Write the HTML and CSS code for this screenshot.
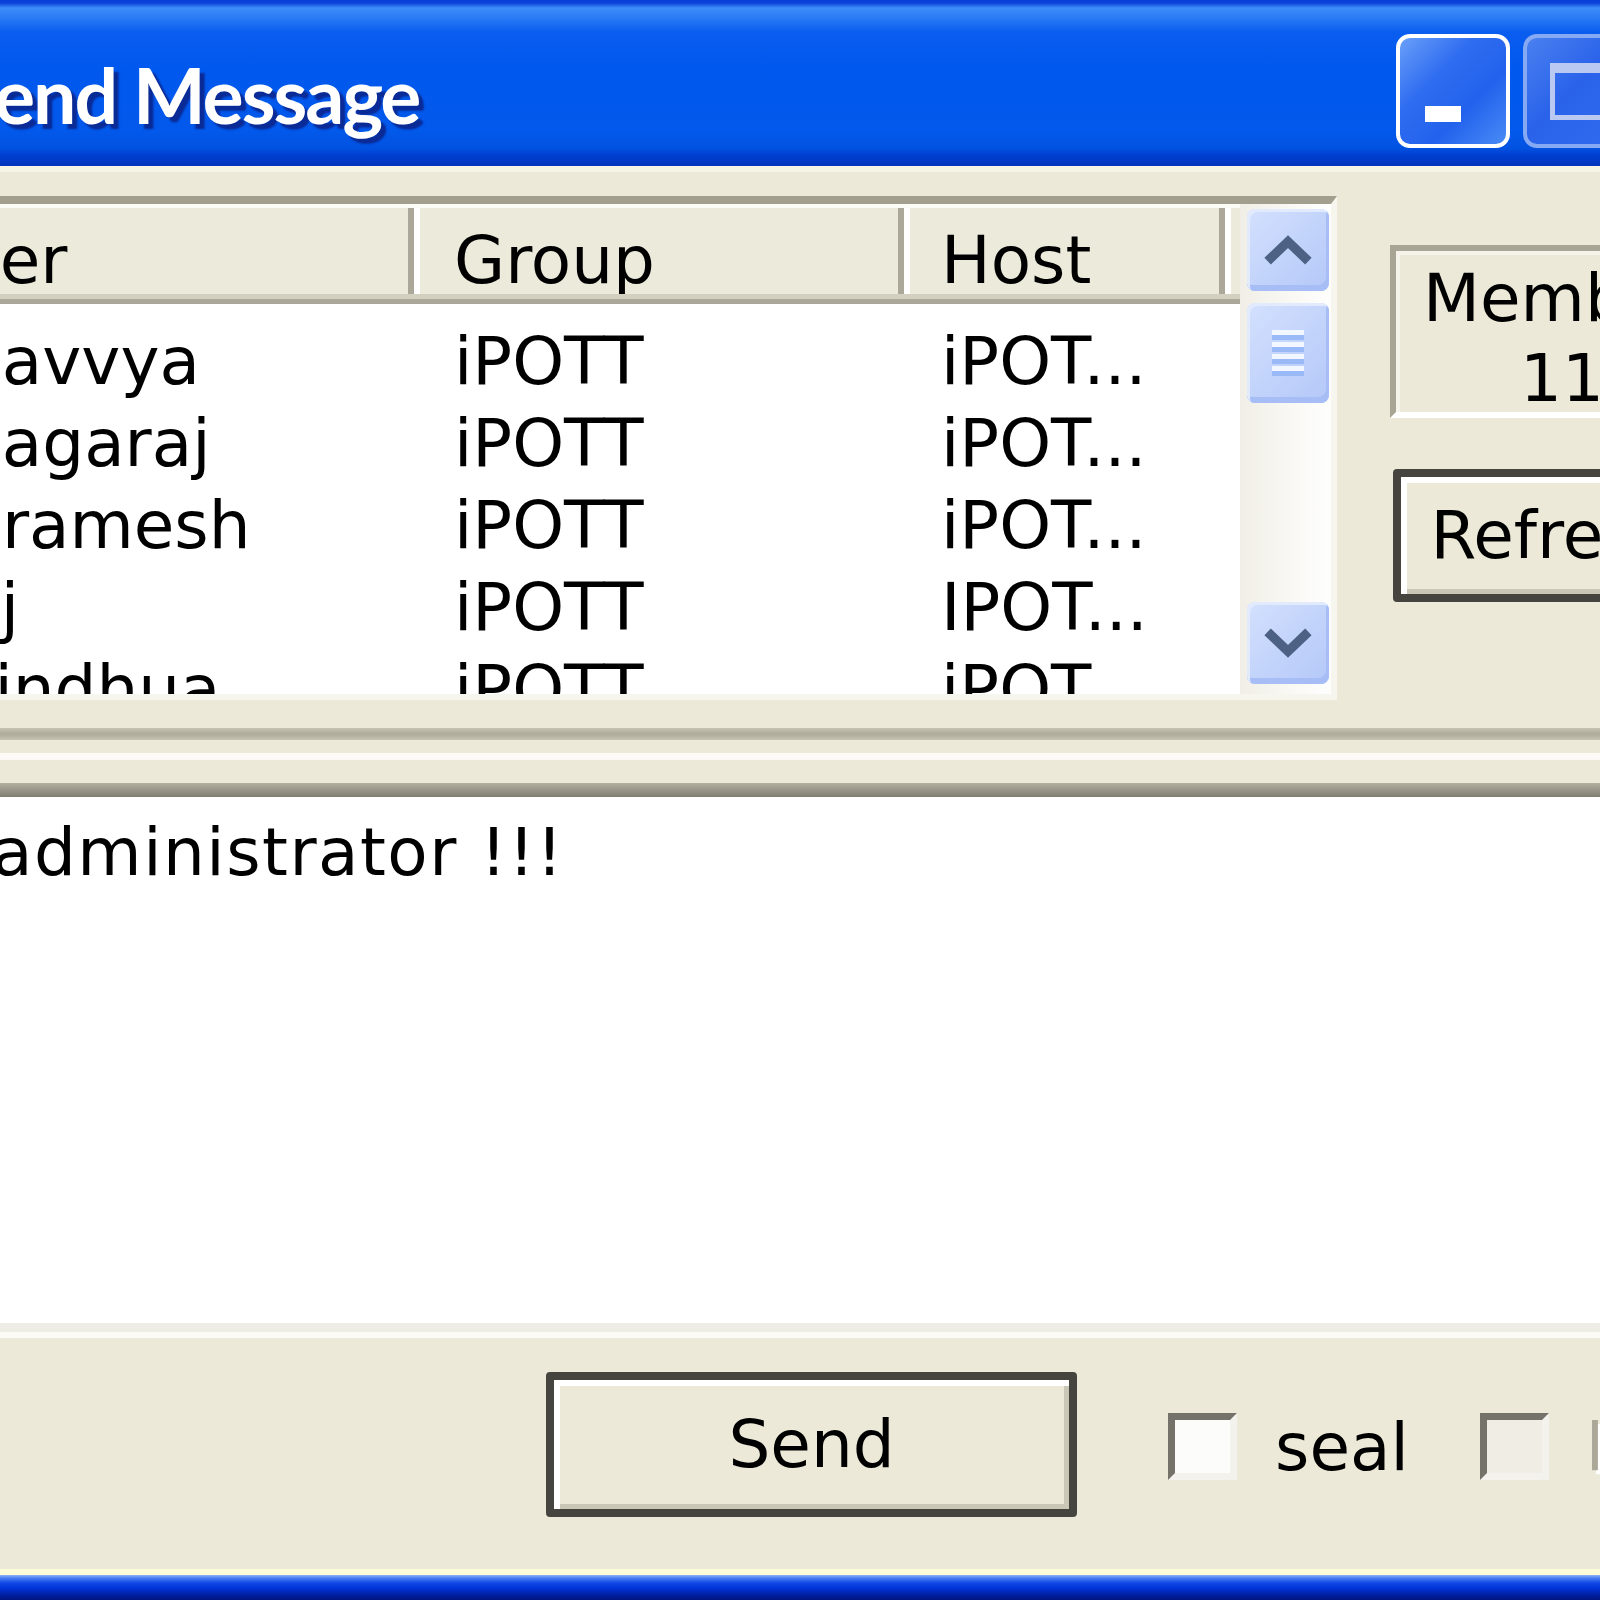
FILE: index.html
```html
<!DOCTYPE html>
<html lang="en">
<head>
    <meta charset="UTF-8">
    <meta name="viewport" content="width=device-width, initial-scale=1.0">
    <title>Send Message</title>
    <link rel="stylesheet" href="styles.css">
</head>
<body>

    <div class="window">
        <div class="titlebar">
            <div class="title">end Message</div>
            <div class="caption-buttons">
                <div class="cap-btn min"><span class="min-glyph"></span></div>
                <div class="cap-btn max"><span class="max-glyph"></span></div>
            </div>
        </div>

        <div class="client">
            <div class="top-row">
                <div class="listview">
                    <div class="lv-main">
                        <div class="lv-header">
                            <div class="hd c1"><span class="hd-user">User</span></div>
                            <div class="hd c2">Group</div>
                            <div class="hd c3">Host</div>
                            <div class="hd c4"></div>
                        </div>
                        <div class="lv-body">
                            <div class="lv-row"><span class="name">havvya</span><span>iPOTT</span><span>iPOT...</span></div>
                            <div class="lv-row"><span class="name">nagaraj</span><span>iPOTT</span><span>iPOT...</span></div>
                            <div class="lv-row"><span class="name">pramesh</span><span>iPOTT</span><span>iPOT...</span></div>
                            <div class="lv-row"><span class="name long">Raj</span><span>iPOTT</span><span>IPOT...</span></div>
                            <div class="lv-row"><span class="name">sindhua</span><span>iPOTT</span><span>iPOT...</span></div>
                        </div>
                    </div>
                    <div class="vscroll">
                        <div class="sb-btn">
                            <svg viewBox="0 0 82 82" width="76" height="76"><path d="M19 53 L41 32 L63 53" fill="none" stroke="#4d6185" stroke-width="10"/></svg>
                        </div>
                        <div class="sb-thumb"><span class="grip"></span></div>
                        <div class="sb-btn down">
                            <svg viewBox="0 0 82 82" width="76" height="76"><path d="M19 29 L41 50 L63 29" fill="none" stroke="#4d6185" stroke-width="10"/></svg>
                        </div>
                    </div>
                </div>

                <div class="side">
                    <div class="members">
                        <div>Members</div>
                        <div class="count">11</div>
                    </div>
                    <div class="btn refresh">Refresh</div>
                </div>
            </div>

            <div class="splitter"></div>

            <div class="edit"><span class="msg">administrator !!!</span></div>

            <div class="bottom-row">
                <div class="btn send">Send</div>
                <span class="check"></span>
                <span class="label">seal</span>
                <span class="check off"></span>
                <span class="label disabled">lock</span>
            </div>
        </div>

        <div class="frame-bottom"></div>
    </div>

</body>
</html>
```

FILE: styles.css
```css
html, body {
    margin: 0;
    padding: 0;
}

body {
    width: 1600px;
    height: 1600px;
    overflow: hidden;
    background: #ece9d8;
    font-family: "DejaVu Sans", Verdana, sans-serif;
    font-size: 66px;
    color: #000;
}

.window {
    width: 1600px;
    height: 1600px;
    display: flex;
    flex-direction: column;
    overflow: hidden;
}

/* ---- title bar ---- */
.titlebar {
    height: 166px;
    flex: none;
    display: flex;
    align-items: flex-start;
    background: linear-gradient(to bottom,
        #0a3ed8 0, #0b42da 3px, #3d8ef9 8px, #2a7bf6 18px,
        #0a5def 32px, #0058ee 70px, #0259eb 130px,
        #0252e2 148px, #003fd0 155px, #0034bd 166px);
}

.title {
    flex: 1;
    margin: 48px 0 0 -6px;
    font-family: Lato, "Liberation Sans", sans-serif;
    font-weight: bold;
    font-size: 77px;
    line-height: 92px;
    letter-spacing: -2px;
    color: #fff;
    text-shadow: 5px 5px 2px #0a2a96;
    white-space: nowrap;
}

.caption-buttons {
    display: flex;
    gap: 13px;
    margin: 34px -37px 0 0;
}

.cap-btn {
    width: 114px;
    height: 114px;
    box-sizing: border-box;
    border-radius: 14px;
    border: 4px solid #fff;
    background: linear-gradient(135deg, #6a9ff9 0%, #2f6df0 35%, #2262ec 65%, #4a8bf7 100%);
}

.cap-btn.max {
    border-color: #86a9f3;
    background: linear-gradient(135deg, #4a80f0 0%, #2a63ea 45%, #2f6cef 100%);
}

.min-glyph {
    display: block;
    width: 36px;
    height: 16px;
    margin: 68px 0 0 25px;
    background: #fff;
}

.max-glyph {
    display: block;
    width: 70px;
    height: 57px;
    box-sizing: border-box;
    margin: 25px 0 0 23px;
    border: 5px solid #b9c9f1;
    border-top-width: 10px;
}

/* ---- client area ---- */
.client {
    flex: 1;
    display: flex;
    flex-direction: column;
    background: #ece9d8;
    border-top: 6px solid #f6f4e4;
    border-bottom: 6px solid #fefcd8;
}

.top-row {
    display: flex;
    margin-top: 24px;
    height: 504px;
}

.listview {
    width: 1337px;
    flex: none;
    box-sizing: border-box;
    display: flex;
    border-top: 8px solid #a29f8f;
    border-right: 6px solid #f6f5ee;
    border-bottom: 6px solid #f6f5ee;
    background: #fff;
}

.lv-main {
    width: 1240px;
    display: flex;
    flex-direction: column;
}

.lv-header {
    height: 100px;
    box-sizing: border-box;
    display: flex;
    border-top: 4px solid #fcfcf7;
    padding-bottom: 10px;
    background: linear-gradient(to bottom, #ebeadb 0, #ebeadb 86px, #d3d0c0 86px, #d3d0c0 91px, #aca899 91px);
}

.hd {
    box-sizing: border-box;
    padding-top: 20px;
    line-height: 66px;
    white-space: nowrap;
    overflow: hidden;
}

.hd.c1 {
    width: 414px;
    border-right: 6px solid #aca899;
}

.hd-user {
    display: inline-block;
    margin-left: -83px;
}

.hd.c2 {
    width: 490px;
    padding-left: 34px;
    border-left: 6px solid #fff;
    border-right: 6px solid #aca899;
}

.hd.c3 {
    width: 321px;
    padding-left: 31px;
    border-left: 6px solid #fff;
    border-right: 6px solid #aca899;
}

.hd.c4 {
    flex: 1;
    border-left: 6px solid #fff;
}

.lv-body {
    flex: 1;
    overflow: hidden;
    padding-top: 17px;
}

.lv-row {
    display: grid;
    grid-template-columns: 454px 487px 1fr;
    height: 82px;
    line-height: 82px;
    white-space: nowrap;
}

.lv-row .name {
    text-indent: -40px;
}

.lv-row .name.long {
    text-indent: -84px;
}

/* scrollbar */
.vscroll {
    width: 91px;
    box-sizing: border-box;
    display: flex;
    flex-direction: column;
    padding: 5px 2px 10px 7px;
    background: linear-gradient(to right, #f0eee6, #f9f8f4 55%, #fefefd);
}

.sb-btn, .sb-thumb {
    width: 82px;
    box-sizing: border-box;
    border-radius: 8px;
    background: linear-gradient(135deg, #d4e0fd 0%, #c3d4fb 50%, #b4c8f8 100%);
    box-shadow: inset 3px 3px 0 #e2eafd, inset -3px -6px 0 #a6bef5;
    display: flex;
    align-items: center;
    justify-content: center;
}

.sb-btn {
    height: 82px;
}

.sb-btn.down {
    margin-top: auto;
}

.sb-thumb {
    height: 100px;
    margin-top: 12px;
}

.grip {
    display: block;
    width: 32px;
    height: 46px;
    background: repeating-linear-gradient(to bottom, #f2f6ff 0, #f2f6ff 5px, #9ab9f7 5px, #9ab9f7 10px, transparent 10px, transparent 12px);
}

/* right side */
.side {
    flex: 1;
    display: flex;
    flex-direction: column;
    align-items: flex-start;
}

.members {
    flex: none;
    width: 372px;
    height: 173px;
    box-sizing: border-box;
    margin: 49px 0 0 53px;
    padding-top: 8px;
    border: 6px solid #fff;
    border-top-color: #a8a595;
    border-left-color: #a8a595;
    box-shadow: inset 4px 4px 0 #f5f3ea;
    text-align: center;
    line-height: 80px;
    white-space: nowrap;
}

.members .count {
    margin-right: 28px;
}

.btn {
    flex: none;
    box-sizing: border-box;
    display: flex;
    align-items: center;
    justify-content: center;
    border: 8px solid #45443f;
    border-radius: 4px;
    background: #ece9d8;
    box-shadow: inset 6px 6px 0 #fff, inset -5px -5px 0 #cbc7b6;
    line-height: 82px;
    white-space: nowrap;
}

.refresh {
    width: 324px;
    height: 133px;
    margin: 51px 0 0 56px;
}

/* splitter between list and message */
.splitter {
    height: 97px;
    flex: none;
    background: linear-gradient(to bottom,
        #ece9d8 0, #ece9d8 28px,
        #c6c3b3 28px, #aeab9b 34px, #c6c3b3 40px,
        #ece9d8 40px, #ece9d8 53px,
        #fbfaf6 53px, #fbfaf6 60px,
        #ece9d8 60px, #ece9d8 83px,
        #b3b0a1 83px, #7f7d71 97px);
}

.edit {
    height: 511px;
    flex: none;
    background: #fff;
    border-bottom: 9px solid #eeede5;
    box-shadow: 0 6px 0 #fbfaf4;
    padding-top: 15px;
    line-height: 82px;
    white-space: nowrap;
}

.msg {
    display: inline-block;
    margin-left: -8px;
    letter-spacing: 1.5px;
}

/* bottom buttons */
.bottom-row {
    flex: 1;
    display: flex;
    align-items: flex-start;
    padding: 40px 0 0 546px;
    white-space: nowrap;
}

.send {
    width: 531px;
    height: 145px;
}

.bottom-row .check {
    flex: none;
    width: 69px;
    height: 67px;
    box-sizing: border-box;
    margin: 41px 0 0 91px;
    border: 7px solid #f3f2ec;
    border-top-color: #757369;
    border-left-color: #757369;
    background: #fcfcfa;
}

.bottom-row .check.off {
    margin-left: 71px;
    background: #efede4;
}

.label {
    margin: 35px 0 0 38px;
    line-height: 82px;
}

.label.disabled {
    margin-left: 37px;
    color: #aca899;
    text-shadow: 4px 4px 0 #fff;
}

.frame-bottom {
    height: 25px;
    flex: none;
    background: linear-gradient(to bottom, #8fb2f8 0, #4b80f2 3px, #0f47e6 8px, #0031d4 14px, #001f9f 20px, #00157f 25px);
}
```
